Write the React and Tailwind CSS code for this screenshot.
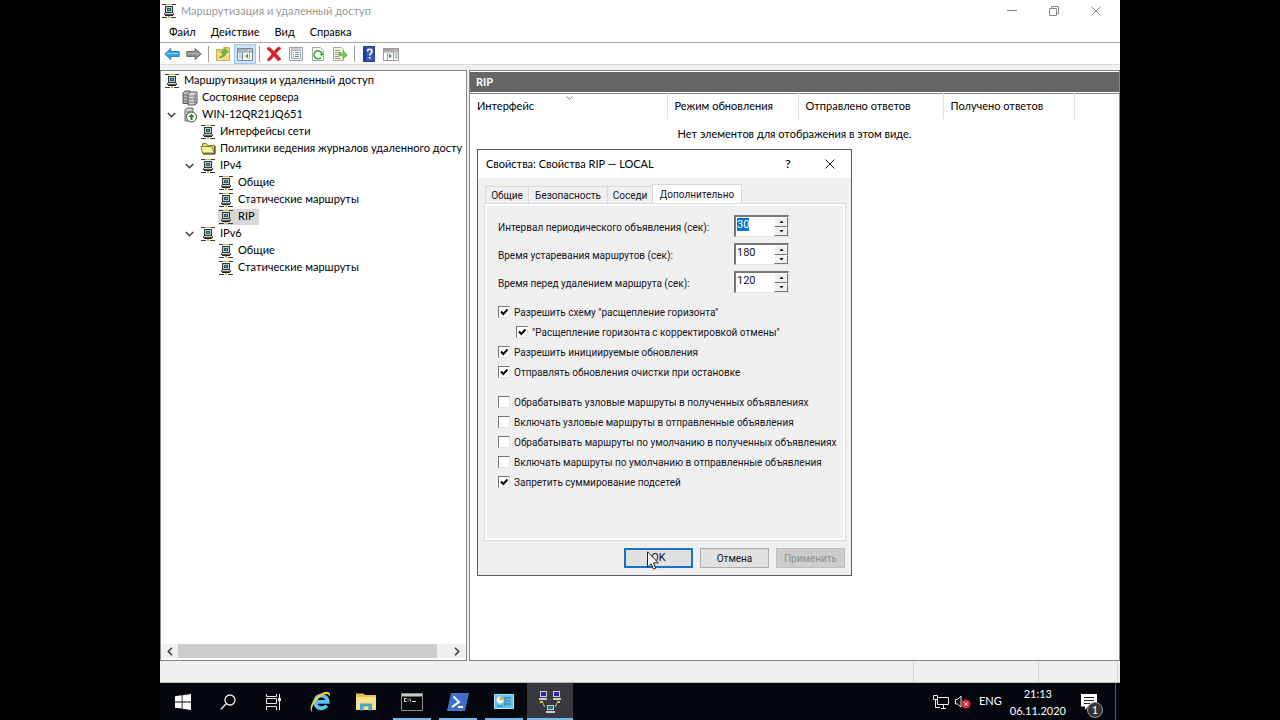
import React, { useEffect, useRef, useState } from "react";

function NodeIcon() {
  return (
    <svg width="16" height="16" viewBox="0 0 16 16" className="shrink-0" aria-hidden="true" shapeRendering="crispEdges">
      <path d="M1 1h14v1H1z" fill="#3a3b40" />
      <path d="M5 1h6v1H5zM7 13h2v2H7z" fill="#c9c02e" />
      <path d="M4 3h8v7H4z" fill="#33353a" />
      <path d="M5 4h6v5H5z" fill="#c3c8c8" />
      <path d="M6 5h4v3H6z" fill="#1c5c5a" />
      <path d="M7 6h2v1H7z" fill="#38c5be" />
      <path d="M3 10h10v2H3z" fill="#55575c" />
      <path d="M4 10h8v1H4z" fill="#d0d0d0" />
      <path d="M1 14h5v1H1zM10 14h5v1h-5z" fill="#3a3b40" />
      <path d="M4 12h8v1H4z" fill="#222" />
    </svg>
  );
}

function ServersIcon() {
  return (
    <svg width="16" height="16" viewBox="0 0 16 16" className="shrink-0" aria-hidden="true">
      <path d="M1 3l2-2h5v11l-2 1.500H1z" fill="#b9b9b9" stroke="#55575b" />
      <path d="M6 4l2-2h7v11l-2 2H6z" fill="#d9d9d9" stroke="#55575b" />
      <path d="M1 5h5M1 8h5M1 11h5M6 6h8M6 9h8M6 12h8M13 4v11" stroke="#5b5d60" strokeWidth=".8" />
    </svg>
  );
}

function ServerUpIcon() {
  return (
    <svg width="16" height="16" viewBox="0 0 16 16" className="shrink-0" aria-hidden="true">
      <path d="M3 3l2-2h6v4L9 14H3z" fill="#d4d4d4" stroke="#66686b" />
      <path d="M4 5h5M4 8h3" stroke="#66686b" />
      <circle cx="9.500" cy="10" r="5" fill="#fff" stroke="#44464a" />
      <path d="M9.500 6.800l3 3.200h-2v3h-2v-3h-2z" fill="#168b2e" />
    </svg>
  );
}

function FolderIcon() {
  return (
    <svg width="16" height="16" viewBox="0 0 16 16" className="shrink-0" aria-hidden="true">
      <path d="M2.500 12V2.500h4l1 2h7V12z" fill="#e4dc6a" stroke="#8b8630" />
      <path d="M2.500 12L.8 5.500h11l2.500 6.500z" fill="#f5f19b" stroke="#8b8630" />
      <path d="M3 13h12V5" fill="none" stroke="#222" />
    </svg>
  );
}

const TREE = [
  { text: "Маршрутизация и удаленный доступ", icon: NodeIcon, pad: "pl-[3px]" },
  { text: "Состояние сервера", icon: ServersIcon, pad: "pl-[3px]", cell: true },
  { text: "WIN-12QR21JQ651", icon: ServerUpIcon, pad: "pl-[3px]", cell: true, open: true },
  { text: "Интерфейсы сети", icon: NodeIcon, pad: "pl-[21px]", cell: true },
  { text: "Политики ведения журналов удаленного досту", icon: FolderIcon, pad: "pl-[21px]", cell: true },
  { text: "IPv4", icon: NodeIcon, pad: "pl-[21px]", cell: true, open: true },
  { text: "Общие", icon: NodeIcon, pad: "pl-[39px]", cell: true },
  { text: "Статические маршруты", icon: NodeIcon, pad: "pl-[39px]", cell: true },
  { text: "RIP", icon: NodeIcon, pad: "pl-[39px]", cell: true, selected: true },
  { text: "IPv6", icon: NodeIcon, pad: "pl-[21px]", cell: true, open: true },
  { text: "Общие", icon: NodeIcon, pad: "pl-[39px]", cell: true },
  { text: "Статические маршруты", icon: NodeIcon, pad: "pl-[39px]", cell: true },
];

function Tree() {
  return (
    <ul className="min-h-0 flex-1 overflow-hidden pt-px text-[11px]" aria-label="Дерево консоли">
      {TREE.map(({ text, icon: Icon, pad, cell, open, selected }, i) => (
        <li key={i} className={`flex h-[17px] items-center whitespace-nowrap ${pad}`}>
          {cell && (
            <span className="flex w-[18px] shrink-0 justify-center pr-1">
              {open && (
                <svg width="9" height="6" viewBox="0 0 9 6" aria-hidden="true">
                  <path d="M.8 1l3.700 3.700L8.200 1" fill="none" stroke="#404040" strokeWidth="1.500" />
                </svg>
              )}
            </span>
          )}
          <span className={`flex h-4 items-center gap-1 ${selected ? "bg-[#d9d9d9] pr-1" : ""}`}>
            <Icon />
            {text}
          </span>
        </li>
      ))}
    </ul>
  );
}

function ToolButton({ label, active, children }) {
  return (
    <button
      type="button"
      aria-label={label}
      className={`flex h-5 w-[22px] items-center justify-center ${active ? "border border-[#99c9ef] bg-[#cce4f7]" : ""}`}
    >
      <svg width="16" height="16" viewBox="0 0 16 16" className="shrink-0" aria-hidden="true">
        {children}
      </svg>
    </button>
  );
}

function ToolSeparator() {
  return <span className="mx-[3px] h-4 w-px bg-[#9f9f9f]" />;
}

function Toolbar() {
  return (
    <div className="flex h-[22px] shrink-0 items-center border-b border-[#dcdce0] bg-white pl-px">
      <ToolButton label="Назад">
        <path d="M.8 8l6-5.500v3h8.400v5H6.800v3z" fill="#35a3e3" stroke="#2f86c4" />
        <path d="M3 7.500h11" stroke="#8fd0f5" />
      </ToolButton>
      <ToolButton label="Вперед">
        <path d="M15.200 8l-6-5.500v3H.8v5h8.400v3z" fill="#909090" stroke="#6e6e6e" />
        <path d="M2 7.500h11" stroke="#b5b5b5" />
      </ToolButton>
      <ToolSeparator />
      <ToolButton label="На уровень выше">
        <path d="M1.500 14.500v-11h6l1-2h6v13z" fill="#ecc965" stroke="#cbb068" />
        <path d="M2 6h12v8H2z" fill="#f4da86" />
        <path d="M4 11.500c3-1 4-3 4-5H6l4-4 3 4h-2c0 3-3 5-7 5z" fill="#62b83a" stroke="#3d8b2c" strokeWidth=".5" />
      </ToolButton>
      <ToolButton label="Показать дерево консоли" active>
        <path d="M.5 2.500h15v12H.5z" fill="#fff" stroke="#7b8591" />
        <path d="M1 3h14v2.500H1z" fill="#a7b3be" />
        <path d="M11 4h1M13 4h1" stroke="#fff" />
        <path d="M5.500 6v8M1 6h14" stroke="#7b8591" />
        <path d="M2 8h2.500M2 10h2.500M2 12h2.500M12.500 7v6" stroke="#7ca3bd" />
        <path d="M11 7.500v5L8 10z" fill="#3ba635" />
      </ToolButton>
      <ToolSeparator />
      <ToolButton label="Удалить">
        <path d="M2.500 1c2 1 4 3 5.500 4.500C9.500 3.500 11 2 13 .8l2 1.700c-2 1.500-3.500 3-5 5 2 2 3.500 4 5 5.500l-2.500 2C11 13.500 9.500 12 8 10c-1.500 1.800-3 3.500-5 5.200L1 13.500c2-1.500 3.500-3.500 5-5.500C4.500 6 3 4.500 1 3z" fill="#d92323" stroke="#b91d20" strokeWidth=".6" />
      </ToolButton>
      <ToolButton label="Свойства">
        <path d="M1.500 1.500h13v13h-13z" fill="#f5f5f5" stroke="#9a9fa3" />
        <path d="M3.500 4.500h9v8h-9z" fill="#fff" stroke="#aab2b7" />
        <path d="M5 6.500h1M7 6.500h4M5 8.500h1M7 8.500h4M5 10.500h1M7 10.500h4" stroke="#5591ad" />
        <path d="M3 3h10" stroke="#a5abaf" />
      </ToolButton>
      <ToolButton label="Обновить">
        <path d="M2.500 1.500h8l3 3v10h-11z" fill="#fff" stroke="#a8a8a8" />
        <path d="M11 11.500A4 4 0 1 1 12 8" fill="none" stroke="#3baa3e" strokeWidth="1.600" />
        <path d="M13.500 7.500l-1.500 3-2.500-2.500z" fill="#3baa3e" />
      </ToolButton>
      <ToolButton label="Экспортировать список">
        <path d="M1.500 1.500h8l2 2v11h-10z" fill="#fffbe2" stroke="#a8a89c" />
        <path d="M3 4.500h5M3 6.500h6M3 8.500h4M3 10.500h4M3 12.500h6" stroke="#8f9797" />
        <path d="M7 7.500h4v-3l4.500 4.500-4.500 4v-3H7z" fill="#7cc94a" stroke="#5aa53b" strokeWidth=".6" />
      </ToolButton>
      <ToolSeparator />
      <ToolButton label="Справка">
        <path d="M2.500.5h11v15h-11z" fill="#3459b9" stroke="#253b83" />
        <path d="M3 1h2v14H3z" fill="#203c92" />
        <path d="M6.500 5.500C6.500 2.500 11 2.500 11 5.300c0 2-2.300 2-2.300 4.200M8.700 11v1.800" fill="none" stroke="#fff" strokeWidth="1.600" />
      </ToolButton>
      <ToolButton label="Показать панель действий">
        <path d="M.5 2.500h15v12H.5z" fill="#fff" stroke="#999" />
        <path d="M1 3h14v2.500H1z" fill="#a5a5a5" />
        <path d="M11 4h1M13 4h1" stroke="#fff" />
        <path d="M10.500 6v8M1 6h14M4.500 7v7" stroke="#999" />
        <path d="M12 8h2.500M12 10h2.500M12 12h2.500" stroke="#7b95a3" />
        <path d="M6 7.500v5l3-2.500z" fill="#3ba635" />
      </ToolButton>
    </div>
  );
}

function NumberField({ id, label, value, selected }) {
  const ref = useRef(null);
  const [current, setCurrent] = useState(value);
  useEffect(() => {
    if (selected) {
      ref.current.focus();
      ref.current.select();
    }
  }, [selected]);
  const step = (n) => setCurrent((v) => String(Number(v) + n));
  return (
    <div className="flex items-center">
      <label htmlFor={id} className="w-[236px] pt-0.5">{label}</label>
      <div className="flex h-[22px] w-[55px] border border-t-2 border-l-2 border-t-[#777] border-l-[#777] border-r-[#e3e3e3] border-b-[#e3e3e3] bg-white">
        <input
          id={id}
          ref={ref}
          inputMode="numeric"
          value={current}
          onChange={(e) => setCurrent(e.target.value)}
          className="h-[15px] w-[38px] min-w-0 pl-px text-[11px] outline-none selection:bg-[#0078d7] selection:text-white"
        />
        <div className="flex w-3.5 flex-col">
          <button type="button" aria-label="Увеличить" onClick={() => step(1)} className="flex flex-1 items-center justify-center border border-t-white border-l-white border-r-[#777] border-b-[#777] bg-[#f0f0f0]">
            <svg width="5" height="3" viewBox="0 0 5 3" aria-hidden="true"><path d="M.5 3h4L2.500.5z" /></svg>
          </button>
          <button type="button" aria-label="Уменьшить" onClick={() => step(-1)} className="flex flex-1 items-center justify-center border border-t-white border-l-white border-r-[#777] border-b-[#777] bg-[#f0f0f0]">
            <svg width="5" height="3" viewBox="0 0 5 3" aria-hidden="true"><path d="M.5 0h4L2.500 2.500z" /></svg>
          </button>
        </div>
      </div>
    </div>
  );
}

function Check({ label, checked, nested }) {
  return (
    <label className={`flex h-5 items-center gap-1 whitespace-nowrap ${nested ? "pl-[18px]" : ""}`}>
      <span className="relative size-3 shrink-0">
        <input
          type="checkbox"
          defaultChecked={checked}
          className="peer block size-3 appearance-none border border-t-[#777] border-l-[#777] border-r-[#e3e3e3] border-b-[#e3e3e3] bg-white"
        />
        <svg viewBox="0 0 12 12" className="pointer-events-none absolute inset-0 hidden size-3 peer-checked:block" aria-hidden="true">
          <path d="M3 5.500l2.300 2.500L9.500 3.500" fill="none" stroke="#000" strokeWidth="2" />
        </svg>
      </span>
      <span>{label}</span>
    </label>
  );
}

const TABS = [
  { name: "Общие", width: "w-[43px]" },
  { name: "Безопасность", width: "w-[79px]" },
  { name: "Соседи", width: "w-[45px]" },
];

function PropertiesDialog() {
  return (
    <section
      role="dialog"
      aria-labelledby="dialog-title"
      className="absolute top-[78px] left-[7px] flex w-[375px] flex-col border border-[#5c5c5c] bg-[#f0f0f0] text-black"
    >
      <header className="flex h-7 items-center bg-white pl-2 text-[11px]">
        <h2 id="dialog-title" className="flex-1">Свойства: Свойства RIP — LOCAL</h2>
        <button type="button" aria-label="Справка" className="h-7 w-[42px] text-[12px] font-semibold">?</button>
        <button type="button" aria-label="Закрыть" className="flex h-7 w-[42px] items-center justify-center">
          <svg width="10" height="10" viewBox="0 0 10 10" aria-hidden="true"><path d="M.5.5l9 9M9.500.5l-9 9" stroke="#222" /></svg>
        </button>
      </header>

      <div className="pt-1.5 pr-1.5 pb-[7px] pl-[7px] font-['Roboto',Arial,sans-serif] text-[10px] leading-[13px] text-[#14141e]">
        <div role="tablist" className="flex items-end">
          {TABS.map((t) => (
            <button key={t.name} type="button" role="tab" aria-selected="false" className={`h-[18px] border border-r-0 border-b-0 border-[#d9d9d9] bg-[#f0f0f0] text-center whitespace-nowrap ${t.width}`}>
              {t.name}
            </button>
          ))}
          <button type="button" role="tab" aria-selected="true" className="h-5 w-[90px] border border-b-0 border-[#d9d9d9] bg-white">
            Дополнительно
          </button>
        </div>

        <div role="tabpanel" className="flex h-[336px] flex-col border-2 border-white bg-[#f0f0f0] pt-[9px] pl-[11px] outline outline-[#dcdcdc]">
          <div className="flex flex-col gap-1.5">
            <NumberField id="interval" label="Интервал периодического объявления (сек):" value="30" selected />
            <NumberField id="expire" label="Время устаревания маршрутов (сек):" value="180" />
            <NumberField id="removal" label="Время перед удалением маршрута (сек):" value="120" />
          </div>
          <div className="mt-[9px]">
            <Check checked label={'Разрешить схему "расщепление горизонта"'} />
            <Check checked nested label={'"Расщепление горизонта с корректировкой отмены"'} />
            <Check checked label="Разрешить инициируемые обновления" />
            <Check checked label="Отправлять обновления очистки при остановке" />
          </div>
          <div className="mt-2.5">
            <Check label="Обрабатывать узловые маршруты в полученных объявлениях" />
            <Check label="Включать узловые маршруты в отправленные объявления" />
            <Check label="Обрабатывать маршруты по умолчанию в полученных объявлениях" />
            <Check label="Включать маршруты по умолчанию в отправленные объявления" />
            <Check checked label="Запретить суммирование подсетей" />
          </div>
        </div>

        <footer className="mt-2 flex justify-end gap-[7px]">
          <button type="button" className="h-5 w-[69px] border-2 border-[#1673c5] bg-[#e1e1e1] text-[11px] leading-4">OK</button>
          <button type="button" className="h-5 w-[69px] border border-[#adadad] bg-[#e1e1e1]">Отмена</button>
          <button type="button" disabled className="h-5 w-[69px] border border-[#bfbfbf] bg-[#cccccc] text-[#8f8f8f]">Применить</button>
        </footer>
      </div>

      <svg width="12" height="19" viewBox="0 0 12 19" className="pointer-events-none absolute bottom-[5px] left-[169px]" aria-hidden="true">
        <path d="M.5.8v15.400l3.600-3.500 2.400 5.500 2.300-1-2.400-5.300h5z" fill="#fff" stroke="#222" />
      </svg>
    </section>
  );
}

function ListPane() {
  const th = "border-r border-[#e2e2e2] pl-[7px] text-left font-normal";
  return (
    <main className="relative flex min-w-0 flex-1 flex-col border border-[#828790] bg-white">
      <h1 className="mt-px flex h-5 shrink-0 items-center bg-[#666] pl-1.5 text-[11px] font-bold text-white">RIP</h1>
      <table className="mt-px w-full table-fixed border-t border-[#828790] text-[11px]">
        <thead>
          <tr className="h-[25px]">
            <th className={`relative w-[197px] ${th}`}>
              Интерфейс
              <svg width="7" height="4" viewBox="0 0 7 4" className="absolute top-0.5 left-[96px]" aria-hidden="true"><path d="M.5.5l3 3 3-3" fill="none" stroke="#888" /></svg>
            </th>
            <th className={`w-[131px] ${th}`}>Режим обновления</th>
            <th className={`w-[145px] ${th}`}>Отправлено ответов</th>
            <th className={`w-[131px] ${th}`}>Получено ответов</th>
            <td />
          </tr>
        </thead>
        <tbody>
          <tr>
            <td colSpan={5} className="h-8 text-center">Нет элементов для отображения в этом виде.</td>
          </tr>
        </tbody>
      </table>
      <PropertiesDialog />
    </main>
  );
}

function TreePane() {
  return (
    <aside className="flex w-[307px] shrink-0 flex-col overflow-hidden border border-[#828790] bg-white">
      <Tree />
      <div className="mb-0.5 flex h-3.5 shrink-0 items-center bg-[#f0f0f0]" aria-hidden="true">
        <span className="flex w-[17px] justify-center">
          <svg width="6" height="9" viewBox="0 0 6 9"><path d="M5 .8L1.300 4.500 5 8.200" fill="none" stroke="#404040" strokeWidth="1.600" /></svg>
        </span>
        <span className="h-full flex-1 bg-[#cdcdcd]" />
        <span className="flex w-[29px] justify-end pr-1.5">
          <svg width="6" height="9" viewBox="0 0 6 9"><path d="M1 .8l3.700 3.700L1 8.200" fill="none" stroke="#404040" strokeWidth="1.600" /></svg>
        </span>
      </div>
    </aside>
  );
}

function TaskButton({ label, width = "w-[46px]", running, active, children }) {
  return (
    <button type="button" aria-label={label} className={`relative flex h-full items-center justify-center ${width} ${active ? "bg-[#37393e]" : ""}`}>
      {children}
      {running && <span className={`absolute bottom-0 h-0.5 bg-[#76b9ed] ${active ? "inset-x-0" : "inset-x-1"}`} />}
    </button>
  );
}

function Taskbar() {
  return (
    <nav className="flex h-[37px] shrink-0 items-stretch bg-[#04070e] text-[11px] text-white" aria-label="Панель задач">
      <TaskButton label="Пуск" width="w-[45px]">
        <svg width="16" height="16" viewBox="0 0 16 16"><path d="M0 2.300l6.700-1v6.200H0zM7.500 1.200L16 0v7.500H7.500zM0 8.400h6.700v6.200L0 13.700zM7.500 8.400H16V16l-8.500-1.200z" fill="#fff" /></svg>
      </TaskButton>
      <TaskButton label="Поиск">
        <svg width="16" height="16" viewBox="0 0 16 16"><circle cx="10" cy="6" r="5" fill="none" stroke="#eee" strokeWidth="1.300" /><path d="M6.500 9.500L.8 15.300" stroke="#eee" strokeWidth="1.400" /></svg>
      </TaskButton>
      <TaskButton label="Представление задач">
        <svg width="16" height="16" viewBox="0 0 16 16" fill="none" stroke="#eee"><path d="M.5 0v2.500h10V0M.5 16v-3.500h10V16M.5 4.500h10v5H.5zM13.500 0v16" /><path d="M12 4h3v3h-3z" fill="#eee" stroke="none" /></svg>
      </TaskButton>
      <TaskButton label="Internet Explorer">
        <svg width="22" height="22" viewBox="0 0 22 22">
          <path d="M17.600 14.500a6.300 6.300 0 1 1 1.100-3.700H7" fill="none" stroke="#5cc4f2" strokeWidth="3.800" />
          <path d="M3 21C-2 17 7 2 17 .8c4-.3 4.500 2 3.300 5.200C20.300 3 18 2.300 15 3.500 8 6.500 1.500 16 3 21z" fill="#f3c93a" />
        </svg>
      </TaskButton>
      <TaskButton label="Проводник">
        <svg width="20" height="18" viewBox="0 0 20 18">
          <path d="M0 2V.5h7.500L9 2h11v15H0z" fill="#e9bd53" />
          <path d="M0 4h20v12.500H0z" fill="#fbe08b" />
          <path d="M4 17.500V10.500h12v7h-3.500v-4h-5v4z" fill="#43a9c9" />
        </svg>
      </TaskButton>
      <TaskButton label="Командная строка" running>
        <svg width="22" height="18" viewBox="0 0 22 18"><path d="M.5.5h21v17H.5z" fill="#090909" stroke="#8c8c8c" /><path d="M1 1h20v2.500H1z" fill="#c8c8c8" /><path d="M5.500 5.500h-2v3h2M7 6v.8M7 7.700v.8M8.500 5.500l1.500 3M11 8.500h4" fill="none" stroke="#fff" strokeWidth=".9" /></svg>
      </TaskButton>
      <TaskButton label="Windows PowerShell" running>
        <svg width="22" height="18" viewBox="0 0 22 18"><path d="M4 0h18l-4 18H0z" fill="#3e70c6" /><path d="M6.500 3.500L12 9l-7 5M11 14h5" fill="none" stroke="#fff" strokeWidth="2" /></svg>
      </TaskButton>
      <TaskButton label="Диспетчер серверов" running>
        <svg width="20" height="15" viewBox="0 0 20 15"><path d="M.5.5h19v14H.5z" fill="#65c3e8" stroke="#aee6f7" /><circle cx="6" cy="6" r="3.500" fill="#e7f7fc" /><path d="M6 6V2.500A3.500 3.500 0 0 1 9.500 6z" fill="#e4a33f" /><path d="M12 4h5M12 7h5M12 10h5M3 12h6M11 3v9" stroke="#27749d" /></svg>
      </TaskButton>
      <TaskButton label="Маршрутизация и удаленный доступ" running active>
        <svg width="22" height="22" viewBox="0 0 22 22" shapeRendering="crispEdges">
          <path d="M1 0h7v6H1zM14 0h7v6h-7zM0 7h8v2H0zM14 7h8v2h-8z" fill="#cecece" />
          <path d="M2 1h5v4H2zM15 1h5v4h-5z" fill="#2928ae" />
          <path d="M8 14h7v5H8zM7 20h9v2H7z" fill="#cecece" />
          <path d="M9 15h5v3H9z" fill="#1c7b72" />
          <path d="M1 10h3v2H1zM18 10h3v2h-3z" fill="#d7c73c" />
          <path d="M4 12h1v2h1v2H5v-1H4zM18 12h-1v2h-1v2h1v-1h1z" fill="#a8a060" />
        </svg>
      </TaskButton>

      <div className="ml-auto flex items-center">
        <svg width="17" height="14" viewBox="0 0 17 14" fill="none" stroke="#eee" aria-hidden="true"><path d="M5.500 2.500h10v7h-11V5M8 13.500h5M10.500 10v3.500M.5.500h4v4h-4zM2.500 5v7.500H7" /></svg>
        <svg width="17" height="14" viewBox="0 0 17 14" className="ml-[5px]" aria-hidden="true">
          <path d="M.5 4.500h2l3.500-3.500v11L2.500 9h-2z" fill="none" stroke="#eee" />
          <circle cx="11" cy="9" r="4.500" fill="#d42a3a" />
          <path d="M9.300 7.300l3.400 3.400M12.700 7.300l-3.400 3.400" stroke="#fff" />
        </svg>
        <span className="ml-[7px]">ENG</span>
        <div className="ml-2 text-center leading-[17px]">
          <div>21:13</div>
          <div>06.11.2020</div>
        </div>
        <button type="button" aria-label="Уведомления: 1" className="relative ml-[15px] h-6 w-[22px]">
          <svg width="16" height="16" viewBox="0 0 16 16" aria-hidden="true"><path d="M0 0h16v12.500H7L4 16v-3.500H0z" fill="#fff" /><path d="M3 3.500h10M3 6.500h10M3 9.500h6" stroke="#222" /></svg>
          <span className="absolute right-0 -bottom-1 flex size-4 items-center justify-center rounded-full border border-[#999] bg-[#333] text-[11px] leading-none">1</span>
        </button>
        <span className="ml-3 h-full w-px bg-[#555]" />
        <span className="w-1" />
      </div>
    </nav>
  );
}

export default function App() {
  return (
    <div className="flex h-screen justify-center overflow-hidden bg-black font-['Lato','Open_Sans',sans-serif] text-black">
      <div className="flex w-3/4 flex-col bg-[#f0f0f0]">
        <header className="flex h-[22px] shrink-0 items-center bg-white pl-px text-[11px]">
          <NodeIcon />
          <span className="flex-1 pl-1 text-[#999]">Маршрутизация и удаленный доступ</span>
          <button type="button" aria-label="Свернуть" className="flex h-5 w-[42px] items-center justify-center">
            <svg width="10" height="10" viewBox="0 0 10 10"><path d="M0 4.500h10" stroke="#888" /></svg>
          </button>
          <button type="button" aria-label="Восстановить" className="flex h-5 w-[42px] items-center justify-center">
            <svg width="10" height="10" viewBox="0 0 10 10" fill="none" stroke="#888"><path d="M.5 2.500h7v7h-7zM2.500 2V.5h7v7H8" /></svg>
          </button>
          <button type="button" aria-label="Закрыть" className="mr-[3px] flex h-5 w-[42px] items-center justify-center">
            <svg width="10" height="10" viewBox="0 0 10 10" stroke="#888"><path d="M.5.5l9 9M9.500.5l-9 9" /></svg>
          </button>
        </header>
        <div role="menubar" className="flex h-[21px] shrink-0 items-center gap-[15px] border-b border-[#a9a9a9] bg-white pl-[9px] text-[11px]">
          {["Файл", "Действие", "Вид", "Справка"].map((m) => (
            <button key={m} type="button" role="menuitem">{m}</button>
          ))}
        </div>
        <Toolbar />
        <div className="mt-[5px] flex min-h-0 flex-1 gap-[2px]">
          <TreePane />
          <ListPane />
        </div>
        <footer className="flex h-[22px] shrink-0 justify-end border-b border-[#bbb]">
          <span className="w-[125px] border-l border-[#d7d7d7]" />
          <span className="w-[79px] border-l border-[#d7d7d7]" />
          <span className="w-[3px] border-l border-[#d7d7d7]" />
        </footer>
        <Taskbar />
      </div>
    </div>
  );
}
